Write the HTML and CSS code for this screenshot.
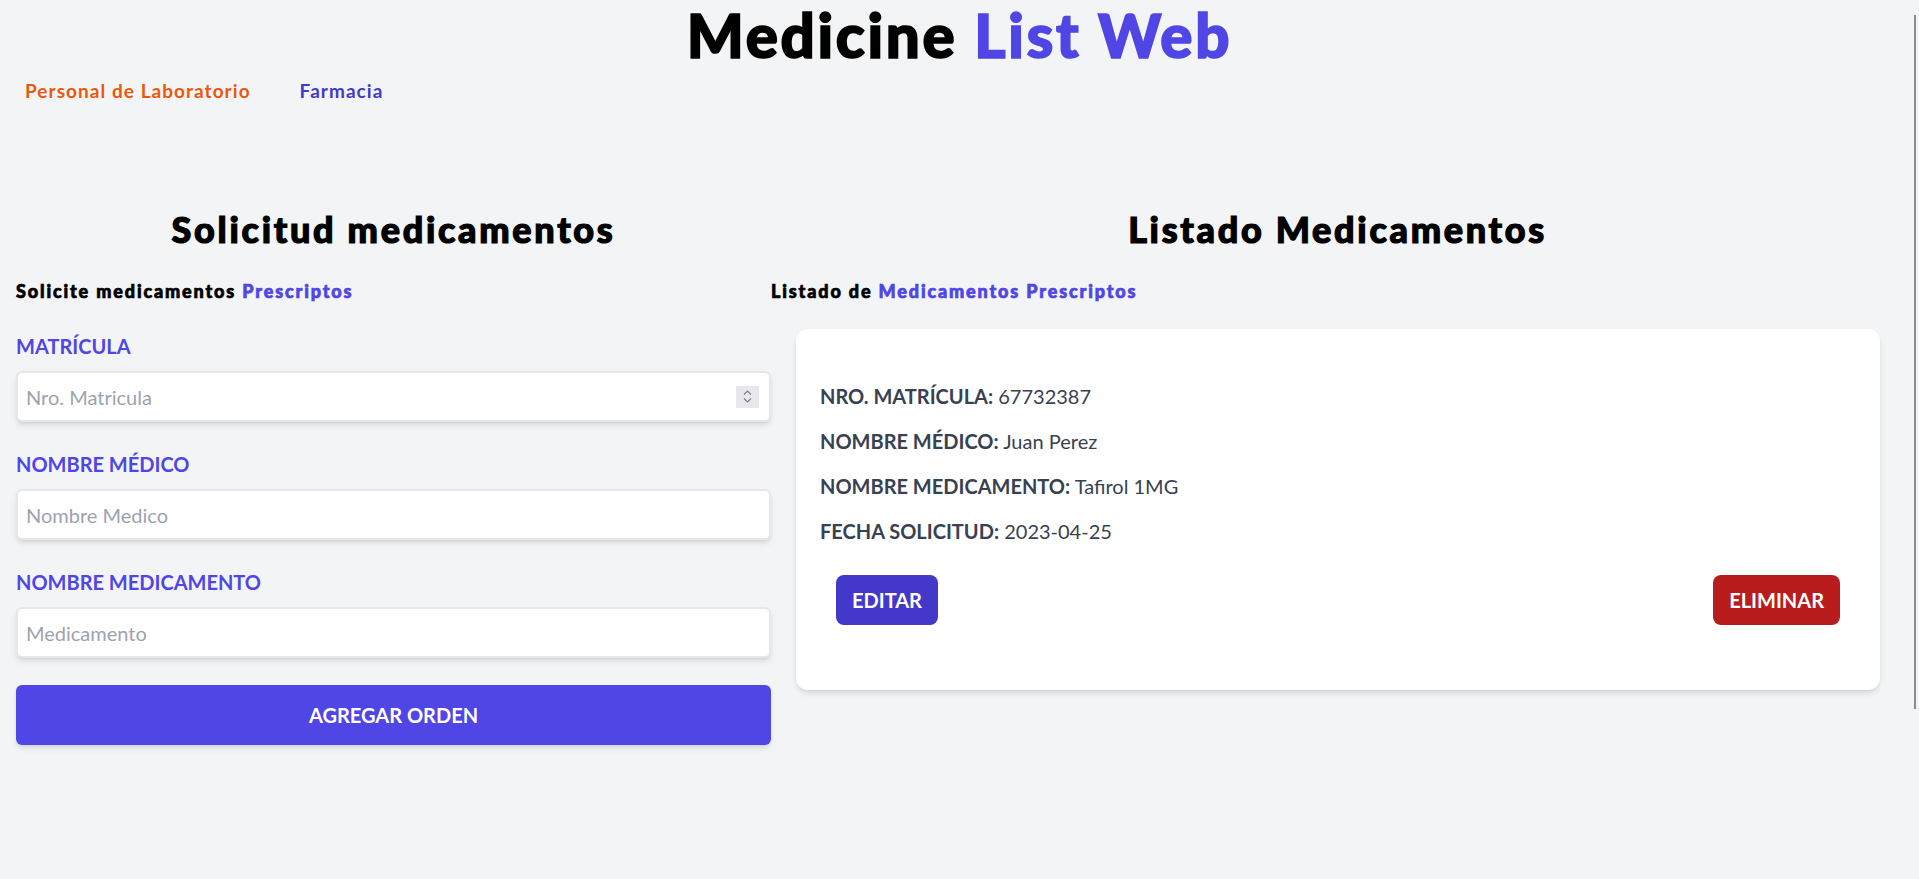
FILE: index.html
```html
<!DOCTYPE html>
<html lang="es">
<head>
<meta charset="utf-8">
<title>Medicine List Web</title>
<link rel="stylesheet" href="styles.css">
</head>
<body>
<div class="scroll-thumb"></div>
<header class="header">
  <h1 class="title">Medicine <span class="accent">List Web</span></h1>
  <nav class="nav">
    <a class="nav-link nav-lab" href="#">Personal de Laboratorio</a>
    <a class="nav-link nav-farm" href="#">Farmacia</a>
  </nav>
</header>
<main class="main">
  <section class="col col-form">
    <h2 class="section-title">Solicitud medicamentos</h2>
    <p class="section-sub">Solicite medicamentos <span class="accent">Prescriptos</span></p>
    <form class="form">
      <div class="field">
        <label class="label" for="matricula">MATRÍCULA</label>
        <div class="input-box">
          <input id="matricula" class="input" type="text" placeholder="Nro. Matricula">
          <span class="spinner">
            <svg width="9" height="5" viewBox="0 0 9 5"><path d="M1 4.5 L4.5 1 L8 4.5" fill="none" stroke="#7b7f88" stroke-width="1.1"/></svg>
            <svg width="9" height="5" viewBox="0 0 9 5"><path d="M1 0.5 L4.5 4 L8 0.5" fill="none" stroke="#7b7f88" stroke-width="1.1"/></svg>
          </span>
        </div>
      </div>
      <div class="field">
        <label class="label" for="medico">NOMBRE MÉDICO</label>
        <div class="input-box">
          <input id="medico" class="input" type="text" placeholder="Nombre Medico">
        </div>
      </div>
      <div class="field">
        <label class="label" for="medicamento">NOMBRE MEDICAMENTO</label>
        <div class="input-box">
          <input id="medicamento" class="input" type="text" placeholder="Medicamento">
        </div>
      </div>
      <button class="btn-submit" type="button">AGREGAR ORDEN</button>
    </form>
  </section>
  <section class="col col-list">
    <h2 class="section-title">Listado Medicamentos</h2>
    <p class="section-sub">Listado de <span class="accent">Medicamentos Prescriptos</span></p>
    <div class="card">
      <p class="row"><span class="row-label">NRO. MATRÍCULA:</span> 67732387</p>
      <p class="row"><span class="row-label">NOMBRE MÉDICO:</span> Juan Perez</p>
      <p class="row"><span class="row-label">NOMBRE MEDICAMENTO:</span> Tafirol 1MG</p>
      <p class="row"><span class="row-label">FECHA SOLICITUD:</span> 2023-04-25</p>
      <div class="card-actions">
        <button class="btn btn-edit" type="button">EDITAR</button>
        <button class="btn btn-delete" type="button">ELIMINAR</button>
      </div>
    </div>
  </section>
</main>
</body>
</html>
```

FILE: styles.css
```css
* { box-sizing: border-box; }
html, body { margin: 0; padding: 0; }
html { overflow: hidden; }
body {
  background: #f3f4f6;
  font-family: Lato, "Open Sans", sans-serif;
  color: #000;
  min-height: 879px;
}
.scroll-thumb {
  position: fixed;
  left: 1914px;
  top: 15px;
  width: 2px;
  height: 694px;
  background: #8b8b8b;
}
.header {
  display: flex;
  flex-direction: column;
  padding-top: 5px;
}
.title {
  margin: 0;
  text-align: center;
  font-size: 60px;
  line-height: 60px;
  font-weight: 900;
  letter-spacing: 2.7px;
  -webkit-text-stroke: 1.7px currentColor;
}
.accent { color: #4f46e5; }
.nav {
  display: flex;
  gap: 49px;
  margin-top: 14px;
  padding-left: 25px;
}
.nav-link {
  font-size: 19px;
  line-height: 24px;
  font-weight: 700;
  letter-spacing: 1.05px;
  text-decoration: none;
}
.nav-lab { color: #ea580c; }
.nav-farm { color: #4338ca; }

.main {
  display: flex;
  margin-top: 106px;
  padding: 0 15px 0 16px;
}
.col-form { width: 755px; flex: none; }
.col-list { flex: 1; min-width: 0; }

.section-title {
  margin: 0;
  text-align: center;
  font-size: 36px;
  line-height: 40px;
  font-weight: 900;
  letter-spacing: 2.7px;
  -webkit-text-stroke: 1.2px currentColor;
}
.section-sub {
  margin: 30px 0 0;
  font-size: 18px;
  line-height: 24px;
  font-weight: 900;
  letter-spacing: 1.85px;
  -webkit-text-stroke: 0.7px currentColor;
}

.form {
  display: flex;
  flex-direction: column;
  margin-top: 29px;
}
.field { display: flex; flex-direction: column; }
.field + .field { margin-top: 28px; }
.label {
  font-size: 20px;
  line-height: 28px;
  font-weight: 700;
  color: #4f46e5;
  margin-bottom: 11px;
}
.input-box {
  display: flex;
  align-items: center;
  height: 51px;
  padding: 0 10px 0 8px;
  background: #fff;
  border: 2px solid #e5e7eb;
  border-radius: 6px;
  box-shadow: 0 4px 6px -1px rgba(0,0,0,0.1), 0 2px 4px -2px rgba(0,0,0,0.1);
}
.input {
  flex: 1;
  min-width: 0;
  border: 0;
  outline: none;
  padding: 0;
  background: transparent;
  font-family: Lato, "Open Sans", sans-serif;
  font-size: 20px;
  color: #111827;
}
.input::placeholder { color: #9ca3af; }
.spinner {
  width: 23px;
  height: 22px;
  background: #e7e7ec;
  display: flex;
  flex-direction: column;
  align-items: center;
  justify-content: center;
  gap: 3px;
}
.spinner svg { display: block; }

.btn-submit {
  margin-top: 27px;
  height: 60px;
  width: 100%;
  border: 0;
  border-radius: 6px;
  background: #4f46e5;
  color: #fff;
  font-family: Lato, "Open Sans", sans-serif;
  font-size: 20px;
  font-weight: 700;
  box-shadow: 0 4px 6px -1px rgba(0,0,0,0.1), 0 2px 4px -2px rgba(0,0,0,0.1);
}

.card {
  margin: 26px 24px 0 25px;
  padding: 53px 24px 65px;
  background: #fff;
  border-radius: 12px;
  box-shadow: 0 4px 6px -1px rgba(0,0,0,0.1), 0 2px 4px -2px rgba(0,0,0,0.1);
}
.row {
  margin: 0 0 17px;
  font-size: 20px;
  line-height: 28px;
  color: #374151;
}
.row-label { font-weight: 700; }
.card-actions {
  display: flex;
  justify-content: space-between;
  margin-top: 30px;
  padding: 0 16px;
}
.btn {
  height: 50px;
  padding: 0 16px;
  border: 0;
  border-radius: 8px;
  color: #fff;
  font-family: Lato, "Open Sans", sans-serif;
  font-size: 20px;
  font-weight: 700;
}
.btn-edit { background: #4338ca; }
.btn-delete { background: #b91c1c; }
```
